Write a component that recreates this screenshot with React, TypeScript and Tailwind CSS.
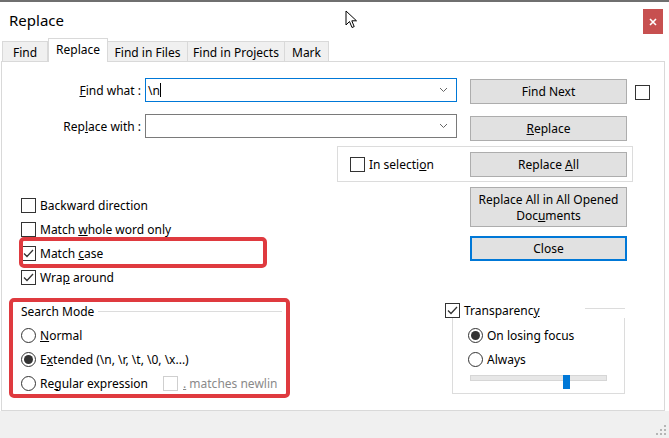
// Notepad++ style "Replace" dialog

const font = "font-['Noto_Sans',sans-serif] text-[12px] leading-[16px] text-black";

function Check({ checked = false, disabled = false }: { checked?: boolean; disabled?: boolean }) {
  return (
    <div
      className={
        "w-[15px] h-[15px] shrink-0 border bg-white flex items-center justify-center " +
        (disabled ? "border-[#cfcfcf]" : "border-[#333333]")
      }
    >
      {checked && (
        <svg width="13" height="13" viewBox="0 0 13 13">
          <polyline points="2,6.5 5,9.5 11,3" fill="none" stroke="#333" strokeWidth="1.3" />
        </svg>
      )}
    </div>
  );
}

function Radio({ checked = false }: { checked?: boolean }) {
  return (
    <div className="w-[15px] h-[15px] shrink-0 rounded-full border border-[#333333] bg-white flex items-center justify-center">
      {checked && <div className="w-[9px] h-[9px] rounded-full bg-[#333333]" />}
    </div>
  );
}

function Chevron() {
  return (
    <svg width="9" height="6" viewBox="0 0 9 6" className="mr-[8px]">
      <polyline points="1,1 4.5,4.5 8,1" fill="none" stroke="#666" strokeWidth="1" />
    </svg>
  );
}

function Button({
  children,
  className = "",
  border = "border border-[#adadad]",
}: {
  children: React.ReactNode;
  className?: string;
  border?: string;
}) {
  return (
    <div
      className={
        "w-[157px] shrink-0 bg-[#e1e1e1] flex items-center justify-center text-center pt-px " +
        border +
        " " +
        className
      }
    >
      {children}
    </div>
  );
}

function CheckRow({ checked, children }: { checked?: boolean; children: React.ReactNode }) {
  return (
    <div className="h-[24px] flex items-center">
      <Check checked={checked} />
      <span className="ml-[4px] pt-px">{children}</span>
    </div>
  );
}

function RadioRow({ checked, children }: { checked?: boolean; children: React.ReactNode }) {
  return (
    <div className="h-[24px] flex items-center">
      <Radio checked={checked} />
      <span className="ml-[4px] pt-px whitespace-nowrap">{children}</span>
    </div>
  );
}

const tabs = [
  { label: "Find", w: "w-[46px]" },
  { label: "Replace", w: "w-[60px]", active: true },
  { label: "Find in Files", w: "w-[81px]" },
  { label: "Find in Projects", w: "w-[98px]" },
  { label: "Mark", w: "w-[45px]" },
];

export default function App() {
  return (
    <div className={"relative w-[669px] h-[438px] overflow-hidden bg-white flex flex-col " + font}>
      <div className="h-[2px] bg-[#6f6f6f]" />

      {/* title bar */}
      <div className="h-[35px] flex items-start">
        <div className="pl-[9px] pt-[8px] text-[15px] leading-[20px]">Replace</div>
        <div className="ml-auto mr-[6px] mt-[7px] w-[20px] h-[25px] bg-[#c75050] flex items-center justify-center">
          <svg width="8" height="8" viewBox="0 0 8 8">
            <path d="M1 1L7 7M7 1L1 7" stroke="white" strokeWidth="1.6" />
          </svg>
        </div>
      </div>

      {/* tabs */}
      <div className="h-[24px] flex items-end pl-[2px]">
        {tabs.map((t) =>
          t.active ? (
            <div
              key={t.label}
              className={
                t.w +
                " h-[24px] -mb-px relative z-10 bg-white border border-b-0 border-[#d9d9d9] flex items-start justify-center pt-[3px]"
              }
            >
              {t.label}
            </div>
          ) : (
            <div
              key={t.label}
              className={
                t.w +
                " h-[20px] bg-[#f0f0f0] border border-b-0 border-[#d9d9d9] -ml-px first:ml-0 flex items-center justify-center pt-[2px]"
              }
            >
              {t.label}
            </div>
          )
        )}
      </div>

      {/* panel */}
      <div className="ml-[1px] w-[664px] h-[350px] shrink-0 border border-[#d9d9d9] bg-white pt-[16px]">
        {/* find what */}
        <div className="flex items-start">
          <div className="w-[139px] h-[24px] leading-[24px] pt-px text-right">
            <span className="underline">F</span>ind what :
          </div>
          <div className="ml-[4px] w-[312px] h-[24px] border border-[#0078d7] flex items-center">
            <span className="pl-[2px] pt-px">\n</span>
            <div className="w-px h-[14px] bg-black" />
            <div className="ml-auto">
              <Chevron />
            </div>
          </div>
          <Button className="ml-[13px] mt-[1px] h-[25px]">Find Next</Button>
          <div className="ml-[8px] mt-[7px]">
            <Check />
          </div>
        </div>

        {/* replace with */}
        <div className="flex items-start mt-[10px]">
          <div className="w-[139px] h-[24px] leading-[24px] pt-px text-right">
            Rep<span className="underline">l</span>ace with :
          </div>
          <div className="ml-[4px] w-[312px] h-[24px] border border-[#7a7a7a] flex items-center justify-end">
            <Chevron />
          </div>
          <Button className="ml-[13px] mt-[2px] h-[25px]">
            <span>
              <span className="underline">R</span>eplace
            </span>
          </Button>
        </div>

        {/* in selection group */}
        <div className="mt-[5px] ml-[335px] w-[296px] h-[36px] border border-[#dcdcdc] flex items-center pl-[12px]">
          <div className="w-[120px] flex items-center">
            <Check />
            <span className="ml-[4px] pt-px">
              In selecti<span className="underline">o</span>n
            </span>
          </div>
          <Button className="h-[25px]">
            <span>
              Replace <span className="underline">A</span>ll
            </span>
          </Button>
        </div>

        {/* options + buttons */}
        <div className="mt-[5px] flex items-start">
          <div className="ml-[19px] w-[449px] pt-[6px]">
            <CheckRow>Backward direction</CheckRow>
            <CheckRow>
              Match <span className="underline">w</span>hole word only
            </CheckRow>
            <div className="relative">
              <CheckRow checked>
                Match <span className="underline">c</span>ase
              </CheckRow>
              <div className="absolute -left-[2px] -top-[4px] w-[248px] h-[31px] border-[4px] border-[#df3a3f] rounded-[5px]" />
            </div>
            <CheckRow checked>
              Wra<span className="underline">p</span> around
            </CheckRow>
          </div>
          <div className="flex flex-col">
            <Button className="h-[40px] leading-[16px]">
              <span>
                Replace All in All Opened
                <br />
                Doc<span className="underline">u</span>ments
              </span>
            </Button>
            <Button className="mt-[9px] h-[25px]" border="border-2 border-[#0078d7]">
              Close
            </Button>
          </div>
        </div>

        {/* search mode + transparency */}
        <div className="mt-[9px] flex items-start">
          <div className="relative ml-[7px] w-[281px] h-[100px] pt-[5px] pl-[12px]">
            <div className="h-[16px] flex items-center">
              <span className="pt-px">Search Mode</span>
              <div className="flex-1 h-px bg-[#dcdcdc] ml-[4px] mr-[8px]" />
            </div>
            <div className="mt-[4px]">
              <RadioRow>
                <span className="underline">N</span>ormal
              </RadioRow>
              <RadioRow checked>
                E<span className="underline">x</span>tended (\n, \r, \t, \0, \x...)
              </RadioRow>
              <div className="h-[24px] flex items-center">
                <Radio />
                <span className="ml-[4px] pt-px w-[123px] whitespace-nowrap">
                  Re<span className="underline">g</span>ular expression
                </span>
                <Check disabled />
                <div className="ml-[5px] pt-px w-[94px] overflow-hidden whitespace-nowrap text-[#8a8a8a]">
                  <span className="underline">.</span> matches newline
                </div>
              </div>
            </div>
            <div className="absolute inset-0 border-[4px] border-[#df3a3f] rounded-[5px]" />
          </div>

          <div className="ml-[155px] mt-[4px] w-[180px]">
            <div className="h-[16px] flex items-start">
              <div className="w-[140px] h-[16px] flex items-center">
                <Check checked />
                <span className="ml-[4px] pt-px">
                  Transparenc<span className="underline">y</span>
                </span>
              </div>
              <div className="flex-1 h-px mt-[6px] bg-[#dcdcdc]" />
            </div>
            <div className="ml-[7px] h-[76px] border-x border-b border-[#dcdcdc] pt-[5px] pl-[15px]">
              <RadioRow checked>On losing focus</RadioRow>
              <RadioRow>Always</RadioRow>
              <div className="relative ml-[2px] h-[14px] w-[137px]">
                <div className="mt-[4px] h-[6px] w-[137px] bg-[#e7e7e7] border border-[#d6d6d6]" />
                <div className="absolute left-[93px] top-0 w-[7px] h-[14px] bg-[#0078d7]" />
              </div>
            </div>
          </div>
        </div>
      </div>

      {/* status strip */}
      <div className="flex-1 bg-[#f0f0f0] flex items-end justify-end pr-[3px] pb-[3px]">
        <svg width="10" height="10" viewBox="0 0 10 10">
          <rect x="8" y="0" width="2" height="2" fill="#b5b5b5" />
          <rect x="4" y="4" width="2" height="2" fill="#b5b5b5" />
          <rect x="8" y="4" width="2" height="2" fill="#b5b5b5" />
          <rect x="0" y="8" width="2" height="2" fill="#b5b5b5" />
          <rect x="4" y="8" width="2" height="2" fill="#b5b5b5" />
          <rect x="8" y="8" width="2" height="2" fill="#b5b5b5" />
        </svg>
      </div>

      {/* mouse pointer */}
      <svg className="absolute left-[345px] top-[10px]" width="14" height="20" viewBox="0 0 14 20">
        <path
          d="M1 1 L1 15 L4.5 11.5 L7 17.5 L9.2 16.6 L6.8 10.8 L11.5 10.8 Z"
          fill="white"
          stroke="black"
          strokeWidth="1"
          strokeLinejoin="round"
        />
      </svg>
    </div>
  );
}
